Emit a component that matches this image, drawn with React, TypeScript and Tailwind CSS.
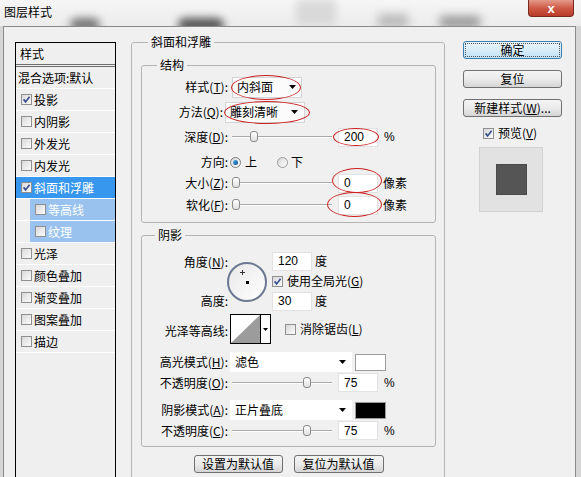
import React from "react";

const Arrow = () => (
  <svg width="7" height="4" viewBox="0 0 7 4" className="shrink-0">
    <path d="M0 0H7L3.5 4Z" fill="#000" />
  </svg>
);

function Check({ checked, className = "" }: { checked?: boolean; className?: string }) {
  return (
    <span
      className={
        "relative inline-block w-[11px] h-[11px] shrink-0 border border-[#8f8f8f] bg-gradient-to-br from-[#d9d9d9] to-[#fbfbfb] " +
        className
      }
    >
      {checked && (
        <svg width="9" height="9" viewBox="0 0 9 9" className="absolute left-0 top-0">
          <path d="M1.6 4.4 L3.6 6.9 L7.6 1.8" stroke="#3a4f8f" strokeWidth="1.7" fill="none" />
        </svg>
      )}
    </span>
  );
}

function Slider({ thumb }: { thumb: string }) {
  return (
    <div className="relative w-[100px] h-[12px] shrink-0">
      <div className="absolute left-0 right-0 top-[5px] h-px bg-[#a8a8a8]" />
      <div className="absolute left-0 right-0 top-[6px] h-px bg-white" />
      <div
        className={
          "absolute top-0 w-[8px] h-[11px] rounded-[3px] border border-[#8a8a8a] bg-gradient-to-b from-white to-[#e0e0e0] " +
          thumb
        }
      />
    </div>
  );
}

function NumBox({ v, className = "" }: { v: string; className?: string }) {
  return (
    <div
      className={
        "w-[40px] h-[19px] shrink-0 bg-white border border-[#e2e2e2] pl-[5px] flex items-center text-[12px] font-['Liberation_Sans',sans-serif] " +
        className
      }
    >
      {v}
    </div>
  );
}

function Btn({ children, className = "", primary }: { children: React.ReactNode; className?: string; primary?: boolean }) {
  return (
    <div
      className={
        "h-[18px] rounded-[3px] border flex items-center justify-center text-[12px] leading-none " +
        (primary
          ? "border-[#3c7fb1] bg-gradient-to-b from-[#ebf6fd] to-[#c2e2f6] "
          : "border-[#707070] bg-gradient-to-b from-[#f4f4f4] via-[#ebebeb] to-[#d5d5d5] ") +
        className
      }
    >
      {primary ? (
        <div className="w-[95px] h-[14px] border border-dotted border-[#555] flex items-center justify-center">{children}</div>
      ) : (
        children
      )}
    </div>
  );
}

function PanelRow({
  label,
  checked,
  kind = "normal",
}: {
  label: string;
  checked?: boolean;
  kind?: "normal" | "active" | "sub";
}) {
  if (kind === "sub") {
    return (
      <div className="h-[22px] border-b border-white flex">
        <div className="ml-[14px] flex-1 bg-[#99c3ee] flex items-center pl-[5px] text-white">
          <Check checked={checked} />
          <span className="ml-[2px]">{label}</span>
        </div>
      </div>
    );
  }
  return (
    <div
      className={
        "h-[22px] border-b border-white flex items-center pl-[5px] " +
        (kind === "active" ? "bg-[#3797ee] text-white" : "")
      }
    >
      <Check checked={checked} />
      <span className="ml-[2px]">{label}</span>
    </div>
  );
}

export default function App() {
  return (
    <div className="relative w-[581px] h-[477px] overflow-hidden bg-[#d6d6d6] text-[12px] leading-[16px] text-black font-['Noto_Sans_CJK_SC','Noto_Sans',sans-serif]">
      {/* title bar */}
      <div className="relative h-[26px] bg-gradient-to-b from-[#f6f6f6] to-[#ececec] overflow-hidden">
        <div className="absolute left-[70px] top-[18px] w-[30px] h-[14px] rounded-full bg-[#777] blur-[4px]" />
        <div className="absolute left-[178px] top-[18px] w-[46px] h-[14px] rounded-full bg-[#555] blur-[4px]" />
        <div className="absolute left-[296px] top-[0px] w-[40px] h-[26px] bg-[#d8d8d8] blur-[5px]" />
        <div className="absolute left-[378px] top-[14px] w-[30px] h-[14px] bg-[#bbb] blur-[5px]" />
        <div className="absolute left-[440px] top-[16px] w-[40px] h-[12px] bg-[#999] blur-[5px]" />
        <div className="relative pl-[4px] pt-[4px] leading-[16px]">图层样式</div>
        <div className="absolute left-[528px] top-0 w-[46px] h-[17px] rounded-b-[4px] border border-t-0 border-[#7a2a1e] bg-gradient-to-b from-[#e3998b] via-[#cf5a47] to-[#b73b28] flex items-center justify-center text-white font-bold text-[13px] leading-none font-['Liberation_Sans',sans-serif]">
          x
        </div>
      </div>

      {/* body */}
      <div className="ml-[3px] w-[573px] h-[451px] border-l border-t border-r border-[#8a8a8a] bg-[#f0f0f0] flex items-start">
        {/* left panel */}
        <div className="ml-[11px] mt-[15px] w-[101px] h-[450px] border border-black bg-[#efefef]">
          <div className="h-[21px] pl-[4px] flex items-center">样式</div>
          <div className="h-[3px] border-y border-[#6e6e6e]" />
          <div className="h-[22px] border-b border-white pl-[2px] flex items-center">混合选项:默认</div>
          <PanelRow label="投影" checked />
          <PanelRow label="内阴影" />
          <PanelRow label="外发光" />
          <PanelRow label="内发光" />
          <PanelRow label="斜面和浮雕" checked kind="active" />
          <PanelRow label="等高线" kind="sub" />
          <PanelRow label="纹理" kind="sub" />
          <PanelRow label="光泽" />
          <PanelRow label="颜色叠加" />
          <PanelRow label="渐变叠加" />
          <PanelRow label="图案叠加" />
          <PanelRow label="描边" />
        </div>

        {/* main */}
        <div className="ml-[15px] mt-[7px]">
          <fieldset className="w-[314px] border border-[#b4b4b4] rounded-[3px] pl-[9px] pr-[8px] pb-[30px]">
            <legend className="ml-[7px] px-[3px] leading-[16px]">斜面和浮雕</legend>

            {/* 结构 */}
            <fieldset className="mt-[7px] w-[295px] border border-[#b4b4b4] rounded-[3px] pt-[3px] pb-[7px]">
              <legend className="ml-[15px] px-[3px] leading-[16px]">结构</legend>
              <div className="h-[22px] flex items-center">
                <div className="w-[86px] text-right">
                  样式(<u>T</u>):
                </div>
                <div className="ml-[4px] w-[70px] h-[21px] bg-[#fbfbfb] border border-[#d4d4d4] flex items-center justify-between pl-[4px] pr-[5px]">
                  <span>内斜面</span>
                  <Arrow />
                </div>
              </div>
              <div className="mt-[3px] h-[22px] flex items-center">
                <div className="w-[81px] text-right">
                  方法(<u>Q</u>):
                </div>
                <div className="ml-[2px] w-[80px] h-[21px] bg-[#fbfbfb] border border-[#d4d4d4] flex items-center justify-between pl-[4px] pr-[6px]">
                  <span>雕刻清晰</span>
                  <Arrow />
                </div>
              </div>
              <div className="mt-[4px] h-[20px] flex items-center">
                <div className="w-[86px] text-right">
                  深度(<u>D</u>):
                </div>
                <div className="ml-[4px]">
                  <Slider thumb="left-[18px]" />
                </div>
                <NumBox v="200" className="ml-[6px]" />
                <span className="ml-[6px] font-['Liberation_Sans',sans-serif]">%</span>
              </div>
              <div className="mt-[5px] h-[20px] flex items-center">
                <div className="w-[86px] text-right">方向:</div>
                <span className="ml-[2px] w-[11px] h-[11px] rounded-full border border-[#7d7d7d] bg-gradient-to-br from-[#d8d8d8] to-white flex items-center justify-center">
                  <span className="w-[5px] h-[5px] rounded-full bg-gradient-to-br from-[#4fb3ef] to-[#0b4f8f]" />
                </span>
                <span className="ml-[4px]">上</span>
                <span className="ml-[20px] w-[11px] h-[11px] rounded-full border border-[#9a9a9a] bg-gradient-to-br from-[#d8d8d8] to-white" />
                <span className="ml-[3px]">下</span>
              </div>
              <div className="mt-[1px] h-[20px] flex items-center">
                <div className="w-[86px] text-right">
                  大小(<u>Z</u>):
                </div>
                <div className="ml-[4px]">
                  <Slider thumb="left-0" />
                </div>
                <NumBox v="0" className="ml-[6px]" />
                <span className="ml-[5px]">像素</span>
              </div>
              <div className="mt-[2px] h-[20px] flex items-center">
                <div className="w-[86px] text-right">
                  软化(<u>F</u>):
                </div>
                <div className="ml-[4px]">
                  <Slider thumb="left-0" />
                </div>
                <NumBox v="0" className="ml-[6px]" />
                <span className="ml-[5px]">像素</span>
              </div>
            </fieldset>

            {/* 阴影 */}
            <fieldset className="mt-[4px] w-[295px] border border-[#b4b4b4] rounded-[3px] pt-[9px] pb-[6px]">
              <legend className="ml-[13px] px-[3px] leading-[16px]">阴影</legend>
              <div className="flex h-[58px]">
                <div className="w-[86px] flex flex-col justify-between items-end">
                  <div className="h-[19px] flex items-center">
                    角度(<u>N</u>):
                  </div>
                  <div className="h-[19px] flex items-center">高度:</div>
                </div>
                <div className="relative ml-[-1px] mt-[10px] w-[40px] h-[40px] shrink-0 rounded-full border-2 border-[#6c7891] bg-gradient-to-br from-[#e8e8e8] to-white">
                  <svg width="5" height="5" viewBox="0 0 5 5" className="absolute left-[11px] top-[6px]">
                    <path d="M2.5 0V5M0 2.5H5" stroke="#333" strokeWidth="1" />
                  </svg>
                  <div className="absolute left-[17px] top-[17px] w-[3px] h-[3px] bg-black" />
                </div>
                <div className="ml-[5px] flex flex-col">
                  <div className="h-[18px] flex items-center">
                    <NumBox v="120" className="h-[18px]" />
                    <span className="ml-[3px]">度</span>
                  </div>
                  <div className="h-[22px] flex items-center">
                    <Check checked />
                    <span className="ml-[4px]">
                      使用全局光(<u>G</u>)
                    </span>
                  </div>
                  <div className="h-[18px] flex items-center">
                    <NumBox v="30" className="h-[18px]" />
                    <span className="ml-[3px]">度</span>
                  </div>
                </div>
              </div>

              <div className="mt-[4px] h-[30px] flex items-center">
                <div className="w-[86px] text-right pt-[4px]">光泽等高线:</div>
                <div className="ml-[2px] w-[41px] h-[30px] border border-black bg-white flex">
                  <svg width="29" height="28" viewBox="0 0 29 28">
                    <polygon points="0,28 29,0 29,28" fill="#9c9c9c" />
                  </svg>
                  <div className="w-px bg-black" />
                  <div className="flex-1 flex items-center justify-center">
                    <svg width="5" height="3" viewBox="0 0 5 3">
                      <path d="M0 0H5L2.5 3Z" fill="#000" />
                    </svg>
                  </div>
                </div>
                <Check className="ml-[14px]" />
                <span className="ml-[4px]">
                  消除锯齿(<u>L</u>)
                </span>
              </div>

              <div className="mt-[8px] h-[20px] flex items-center">
                <div className="w-[86px] text-right">
                  高光模式(<u>H</u>):
                </div>
                <div className="ml-[2px] w-[122px] h-[20px] bg-white flex items-center justify-between pl-[5px] pr-[6px]">
                  <span>滤色</span>
                  <Arrow />
                </div>
                <div className="ml-[3px] w-[31px] h-[17px] border border-[#9c9c9c] bg-white" />
              </div>
              <div className="mt-[1px] h-[19px] flex items-center">
                <div className="w-[86px] text-right">
                  不透明度(<u>O</u>):
                </div>
                <div className="ml-[4px]">
                  <Slider thumb="left-[71px]" />
                </div>
                <NumBox v="75" className="ml-[6px]" />
                <span className="ml-[6px] font-['Liberation_Sans',sans-serif]">%</span>
              </div>
              <div className="mt-[8px] h-[20px] flex items-center">
                <div className="w-[86px] text-right">
                  阴影模式(<u>A</u>):
                </div>
                <div className="ml-[2px] w-[122px] h-[20px] bg-white flex items-center justify-between pl-[5px] pr-[6px]">
                  <span>正片叠底</span>
                  <Arrow />
                </div>
                <div className="ml-[3px] w-[31px] h-[17px] border border-[#9c9c9c] bg-black" />
              </div>
              <div className="mt-[1px] h-[19px] flex items-center">
                <div className="w-[86px] text-right">
                  不透明度(<u>C</u>):
                </div>
                <div className="ml-[4px]">
                  <Slider thumb="left-[71px]" />
                </div>
                <NumBox v="75" className="ml-[6px]" />
                <span className="ml-[6px] font-['Liberation_Sans',sans-serif]">%</span>
              </div>
            </fieldset>

            <div className="mt-[8px] flex justify-center gap-[11px]">
              <Btn className="w-[89px] h-[17px]">设置为默认值</Btn>
              <Btn className="w-[90px] h-[17px]">复位为默认值</Btn>
            </div>
          </fieldset>
        </div>

        {/* right column */}
        <div className="ml-[18px] mt-[14px] w-[99px] flex flex-col">
          <Btn primary>确定</Btn>
          <Btn className="mt-[11px]">复位</Btn>
          <Btn className="mt-[11px]">
            新建样式(<u>W</u>)...
          </Btn>
          <div className="mt-[8px] h-[16px] pl-[20px] flex items-center">
            <Check checked />
            <span className="ml-[4px]">
              预览(<u>V</u>)
            </span>
          </div>
          <div className="mt-[6px] ml-[16px] w-[64px] h-[65px] bg-[#e2e2e2] border border-[#d2d2d2] flex items-center justify-center">
            <div className="w-[31px] h-[31px] bg-[#555555] border border-[#4a4a4a]" />
          </div>
        </div>
      </div>

      {/* red annotation ellipses */}
      <div className="absolute left-[231px] top-[75px] w-[70px] h-[25px] rounded-[50%] border border-[#cc1f1f]" />
      <div className="absolute left-[224px] top-[101px] w-[86px] h-[23px] rounded-[50%] border border-[#cc1f1f]" />
      <div className="absolute left-[333px] top-[128px] w-[46px] h-[18px] rounded-[50%] border border-[#cc1f1f]" />
      <div className="absolute left-[332px] top-[168px] w-[50px] h-[25px] rounded-[50%] border border-[#cc1f1f]" />
      <div className="absolute left-[327px] top-[192px] w-[55px] h-[25px] rounded-[50%] border border-[#cc1f1f]" />
    </div>
  );
}
